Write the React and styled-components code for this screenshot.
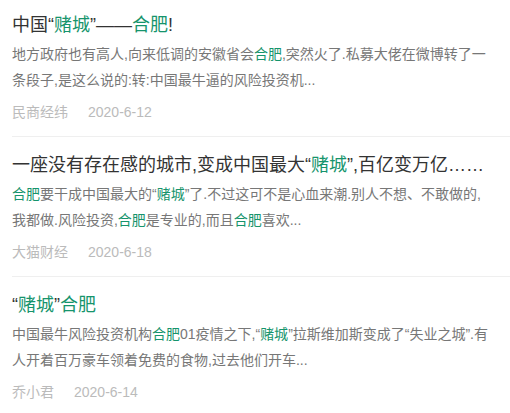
import styled, { createGlobalStyle } from "styled-components";

const GlobalStyle = createGlobalStyle`
  body {
    margin: 0;
    background: #fff;
    font-family: "Liberation Sans", "Noto Sans CJK SC", sans-serif;
  }
`;

const news = [
  {
    title: ["中国“", { k: "赌城" }, "”——", { k: "合肥" }, "!"],
    desc: [
      "地方政府也有高人,向来低调的安徽省会",
      { k: "合肥" },
      ",突然火了.私募大佬在微博转了一条段子,是这么说的:转:中国最牛逼的风险投资机...",
    ],
    source: "民商经纬",
    date: "2020-6-12",
  },
  {
    title: ["一座没有存在感的城市,变成中国最大“", { k: "赌城" }, "”,百亿变万亿……"],
    desc: [
      { k: "合肥" },
      "要干成中国最大的“",
      { k: "赌城" },
      "”了.不过这可不是心血来潮.别人不想、不敢做的,我都做.风险投资,",
      { k: "合肥" },
      "是专业的,而且",
      { k: "合肥" },
      "喜欢...",
    ],
    source: "大猫财经",
    date: "2020-6-18",
  },
  {
    title: ["“", { k: "赌城" }, "”", { k: "合肥" }],
    desc: [
      "中国最牛风险投资机构",
      { k: "合肥" },
      "01疫情之下,“",
      { k: "赌城" },
      "”拉斯维加斯变成了“失业之城”.有人开着百万豪车领着免费的食物,过去他们开车...",
    ],
    source: "乔小君",
    date: "2020-6-14",
  },
];

const List = styled.ul`
  list-style: none;
  margin: 0;
  padding: 0;
`;

const Item = styled.li`
  margin-left: 12px;
  padding: 15px 20px 14px 0;
  border-bottom: 1px solid #efefef;

  &:first-child {
    padding-top: 12px;
  }
`;

const Title = styled.h3`
  margin: 0;
  font-size: 18px;
  font-weight: normal;
  line-height: 26px;
  color: #333;
`;

const Desc = styled.p`
  margin: 3px 0 0;
  font-size: 14px;
  line-height: 26px;
  color: #777;
`;

const Keyword = styled.em`
  font-style: normal;
  color: #16946c;
`;

const Meta = styled.div`
  display: flex;
  gap: 20px;
  margin-top: 9px;
  font-size: 14px;
  line-height: 20px;
  color: #bbb;
`;

const highlight = (parts) =>
  parts.map((p, i) =>
    typeof p === "string" ? p : <Keyword key={i}>{p.k}</Keyword>
  );

const App = () => {
  return (
    <>
      <GlobalStyle />
      <List>
        {news.map((n) => (
          <Item key={n.date}>
            <Title>{highlight(n.title)}</Title>
            <Desc>{highlight(n.desc)}</Desc>
            <Meta>
              <span>{n.source}</span>
              <span>{n.date}</span>
            </Meta>
          </Item>
        ))}
      </List>
    </>
  );
};

export default App;
